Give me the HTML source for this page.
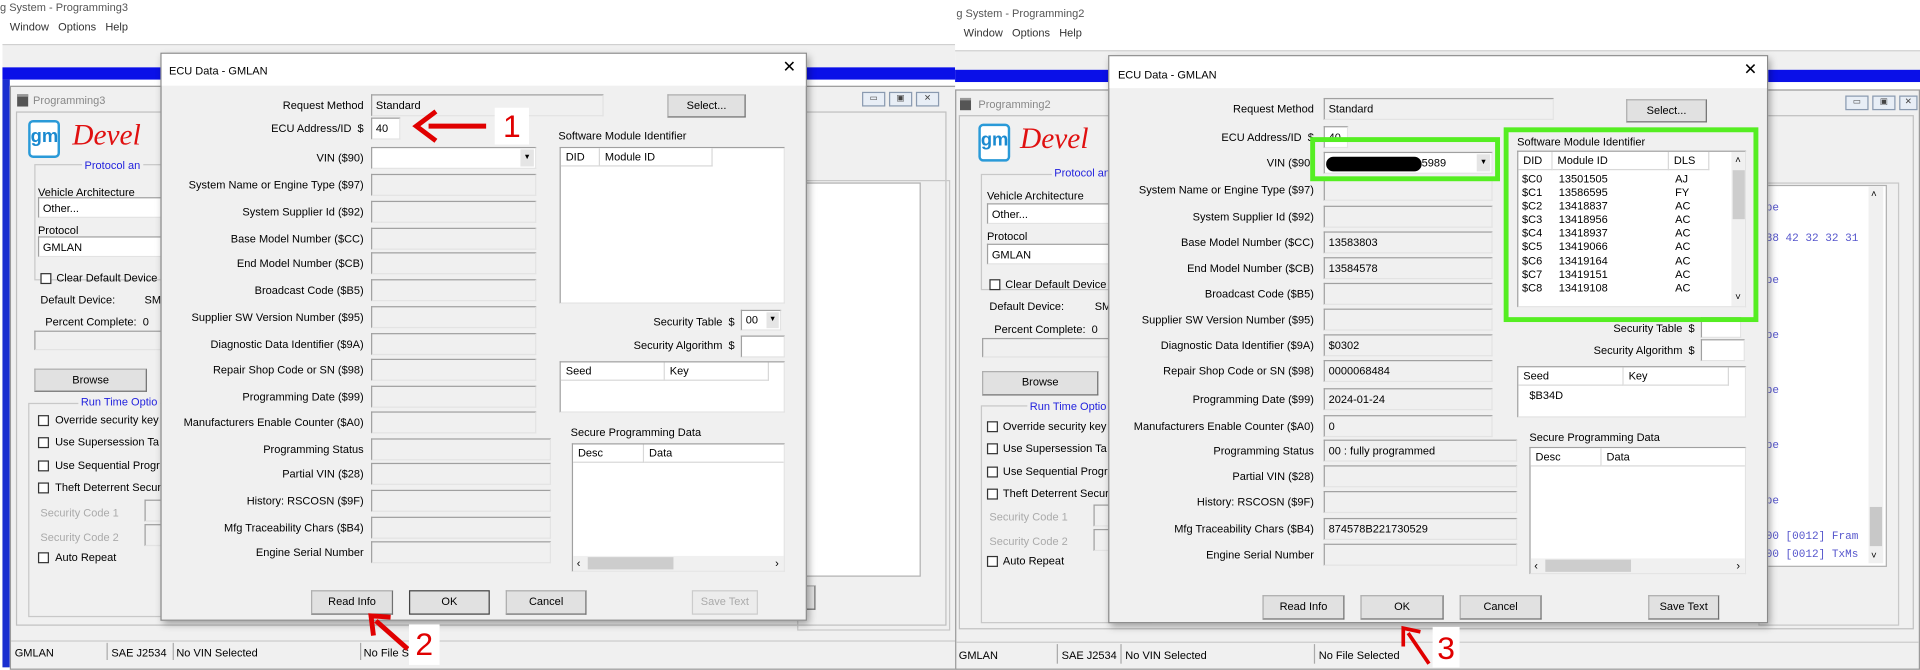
<!DOCTYPE html>
<html><head><meta charset="utf-8">
<style>
html,body{margin:0;padding:0;width:1920px;height:667px;overflow:hidden;background:#fff}
#s{position:absolute;left:0;top:0;width:1568px;height:545px;transform:scale(1.22449);transform-origin:0 0;font-family:"Liberation Sans",sans-serif;font-size:9px;color:#000}
.a{position:absolute}
.lb{position:absolute;white-space:nowrap;font-size:9px;line-height:12px}
.r{text-align:right}
.sk{position:absolute;box-sizing:border-box;background:#f0f0f0;border:1px solid #a0a0a0;border-right-color:#e3e3e3;border-bottom-color:#e3e3e3;font-size:9px;line-height:16px;padding-left:3px;white-space:nowrap;overflow:hidden}
.wh{background:#fff}
.bt{position:absolute;box-sizing:border-box;background:#e1e1e1;border:1px solid #adadad;border-right-color:#707070;border-bottom-color:#707070;text-align:center;font-size:9px;line-height:17px}
.cb{position:absolute;width:9px;height:9px;box-sizing:border-box;border:1px solid #333;background:#fff}
.dlg{position:absolute;background:#f0f0f0;border:1px solid #8a8a8a;box-shadow:2px 3px 6px rgba(0,0,0,.35)}
.tb{position:absolute;left:0;top:0;right:0;height:26px;background:#fff}
.lst{position:absolute;box-sizing:border-box;background:#fff;border:1px solid #a0a0a0;border-right-color:#e3e3e3;border-bottom-color:#e3e3e3;overflow:hidden}
.hd{position:absolute;top:0;height:15px;box-sizing:border-box;border-right:1px solid #d8d8d8;border-bottom:1px solid #d8d8d8;font-size:9px;line-height:14px;padding-left:4px;background:#fff}
.blue{color:#2222dd}
.gry{color:#999}
.mono{font-family:"Liberation Mono",monospace;color:#5555cc;font-size:9px}
.win{position:absolute;background:#f0f0f0;border:1px solid #9a9a9a}
.ctl{position:absolute;width:19px;height:12px;box-sizing:border-box;border:1px solid #8a9ab0;background:#e8eef6;font-size:7px;line-height:10px;text-align:center;color:#444}
.grp{position:absolute;box-sizing:border-box;border:1px solid #c8c8c8}
.green{position:absolute;box-sizing:border-box;border:4px solid #55ee22}
.num{position:absolute;background:#fff;font-size:26px;line-height:30px;text-align:center;color:#e00000}
</style></head><body><div id="s">

<div class="lb" style="left:0;top:0;color:#555">g System - Programming3</div>
<div class="lb" style="top:16px;left:8px;color:#333">Window&nbsp;&nbsp;&nbsp;Options&nbsp;&nbsp;&nbsp;Help</div>
<div class="a" style="left:2px;top:36px;width:778px;height:1px;background:#ccc"></div>
<div class="a" style="left:2px;top:37px;width:778px;height:18px;background:#f0f0f0"></div>
<div class="a" style="left:2px;top:55px;width:778px;height:10px;background:#0a10e8"></div>
<div class="a" style="left:2px;top:65px;width:6px;height:480px;background:#1a2fd0"></div>
<div class="win" style="left:8px;top:70px;width:772px;height:475px">
 <div class="a" style="left:5px;top:6px;width:9px;height:8px;background:#555;border-top:2px solid #999"></div>
 <div class="lb gry" style="left:18px;top:5px;color:#888">Programming3</div>
 <div class="ctl" style="left:695px;top:4px">▭</div><div class="ctl" style="left:717px;top:4px">▣</div><div class="ctl" style="left:739px;top:4px">✕</div>
 <div class="a" style="left:4px;top:20px;width:760px;height:420px;border:1px solid #c0c0c0;box-sizing:border-box"></div>
 <div class="a" style="left:14px;top:27px;width:26px;height:31px;border:2px solid #2a9ad8;border-radius:4px;box-sizing:border-box;background:#fff;color:#1a8ad0;font-weight:bold;font-size:15px;text-align:center;line-height:24px">gm</div>
 <div class="a" style="left:50px;top:27px;font-family:'Liberation Serif',serif;font-style:italic;font-size:24px;color:#e01010">Devel</div>
 <div class="grp" style="left:19px;top:63px;width:125px;height:95px"></div>
 <div class="lb blue" style="left:58px;top:58px;background:#f0f0f0;padding:0 2px">Protocol an</div>
 <div class="lb" style="left:22px;top:80px">Vehicle Architecture</div>
 <div class="sk wh" style="left:22px;top:90px;width:120px;height:17px">Other...</div>
 <div class="lb" style="left:22px;top:111px">Protocol</div>
 <div class="sk wh" style="left:22px;top:122px;width:120px;height:17px">GMLAN</div>
 <div class="cb" style="left:24px;top:152px"></div><div class="lb" style="left:37px;top:150px">Clear Default Device</div>
 <div class="lb" style="left:24px;top:168px">Default Device:</div><div class="lb" style="left:109px;top:168px">SM</div>
 <div class="lb" style="left:28px;top:186px">Percent Complete:&nbsp; 0</div>
 <div class="sk" style="left:19px;top:199px;width:130px;height:16px"></div>
 <div class="bt" style="left:19px;top:230px;width:92px;height:19px">Browse</div>
 <div class="grp" style="left:14px;top:258px;width:140px;height:175px"></div>
 <div class="lb blue" style="left:55px;top:251px;background:#f0f0f0;padding:0 2px">Run Time Optio</div>
 <div class="cb" style="left:22px;top:268px"></div><div class="lb" style="left:36px;top:266px">Override security key</div>
 <div class="cb" style="left:22px;top:286px"></div><div class="lb" style="left:36px;top:284px">Use Supersession Ta</div>
 <div class="cb" style="left:22px;top:305px"></div><div class="lb" style="left:36px;top:303px">Use Sequential Progr</div>
 <div class="cb" style="left:22px;top:323px"></div><div class="lb" style="left:36px;top:321px">Theft Deterrent Secur</div>
 <div class="lb" style="left:24px;top:342px;color:#aaa">Security Code 1</div><div class="sk" style="left:109px;top:337px;width:20px;height:18px"></div>
 <div class="lb" style="left:24px;top:362px;color:#aaa">Security Code 2</div><div class="sk" style="left:109px;top:357px;width:20px;height:18px"></div>
 <div class="cb" style="left:22px;top:380px"></div><div class="lb" style="left:36px;top:378px">Auto Repeat</div>
 <div class="grp" style="left:642px;top:76px;width:125px;height:368px"></div>
 <div class="a" style="left:647px;top:78px;width:94px;height:320px;background:#fff;border:1px solid #b0b0b0"></div>
 <div class="bt" style="left:600px;top:407px;width:57px;height:20px"></div>
 <div class="a" style="left:0;top:452px;width:772px;height:18px;border-top:1px solid #ccc"></div>
 <div class="lb" style="left:3px;top:456px">GMLAN</div>
 <div class="a" style="left:78px;top:454px;width:1px;height:14px;background:#aaa"></div>
 <div class="lb" style="left:82px;top:456px">SAE J2534</div>
 <div class="a" style="left:132px;top:454px;width:1px;height:14px;background:#aaa"></div>
 <div class="lb" style="left:135px;top:456px">No VIN Selected</div>
 <div class="a" style="left:285px;top:454px;width:1px;height:14px;background:#aaa"></div>
 <div class="lb" style="left:288px;top:456px">No File S</div>
</div>

<div class="dlg" style="left:131px;top:43px;width:526px;height:462px">
 <div class="tb"></div>
 <div class="lb" style="left:6px;top:8px">ECU Data - GMLAN</div>
 <div class="lb" style="right:8px;top:5px;font-size:13px">✕</div>
 <div class="lb r" style="left:0;width:165px;top:36px">Request Method</div>
 <div class="lb r" style="left:0;width:165px;top:55px">ECU Address/ID&nbsp; $</div>
 <div class="lb r" style="left:0;width:165px;top:79px">VIN ($90)</div>
 <div class="lb r" style="left:0;width:165px;top:101px">System Name or Engine Type ($97)</div>
 <div class="lb r" style="left:0;width:165px;top:123px">System Supplier Id ($92)</div>
 <div class="lb r" style="left:0;width:165px;top:145px">Base Model Number ($CC)</div>
 <div class="lb r" style="left:0;width:165px;top:165px">End Model Number ($CB)</div>
 <div class="lb r" style="left:0;width:165px;top:187px">Broadcast Code ($B5)</div>
 <div class="lb r" style="left:0;width:165px;top:209px">Supplier SW Version Number ($95)</div>
 <div class="lb r" style="left:0;width:165px;top:231px">Diagnostic Data Identifier ($9A)</div>
 <div class="lb r" style="left:0;width:165px;top:252px">Repair Shop Code or SN ($98)</div>
 <div class="lb r" style="left:0;width:165px;top:274px">Programming Date ($99)</div>
 <div class="lb r" style="left:0;width:165px;top:295px">Manufacturers Enable Counter ($A0)</div>
 <div class="lb r" style="left:0;width:165px;top:317px">Programming Status</div>
 <div class="lb r" style="left:0;width:165px;top:337px">Partial VIN ($28)</div>
 <div class="lb r" style="left:0;width:165px;top:359px">History: RSCOSN ($9F)</div>
 <div class="lb r" style="left:0;width:165px;top:381px">Mfg Traceability Chars ($B4)</div>
 <div class="lb r" style="left:0;width:165px;top:401px">Engine Serial Number</div>
 <div class="sk" style="left:171px;top:33px;width:190px;height:18px">Standard</div>
 <div class="sk wh" style="left:171px;top:52px;width:24px;height:18px">40</div>
 <div class="sk wh" style="left:171px;top:76px;width:135px;height:18px"></div>
 <div class="a" style="left:293px;top:78px;width:11px;height:14px;background:#e5e5e5;font-size:6px;text-align:center;line-height:14px">▼</div>
 <div class="sk" style="left:171px;top:98px;width:135px;height:18px"></div>
 <div class="sk" style="left:171px;top:120px;width:135px;height:18px"></div>
 <div class="sk" style="left:171px;top:142px;width:135px;height:18px"></div>
 <div class="sk" style="left:171px;top:162px;width:135px;height:18px"></div>
 <div class="sk" style="left:171px;top:184px;width:135px;height:18px"></div>
 <div class="sk" style="left:171px;top:206px;width:135px;height:18px"></div>
 <div class="sk" style="left:171px;top:228px;width:135px;height:18px"></div>
 <div class="sk" style="left:171px;top:249px;width:135px;height:18px"></div>
 <div class="sk" style="left:171px;top:271px;width:135px;height:18px"></div>
 <div class="sk" style="left:171px;top:292px;width:135px;height:18px"></div>
 <div class="sk" style="left:171px;top:314px;width:147px;height:18px"></div>
 <div class="sk" style="left:171px;top:334px;width:147px;height:18px"></div>
 <div class="sk" style="left:171px;top:356px;width:147px;height:18px"></div>
 <div class="sk" style="left:171px;top:378px;width:147px;height:18px"></div>
 <div class="sk" style="left:171px;top:398px;width:147px;height:18px"></div>
 <div class="bt" style="left:413px;top:33px;width:64px;height:19px">Select...</div>
 <div class="lb" style="left:324px;top:61px">Software Module Identifier</div>
 <div class="lst" style="left:325px;top:76px;width:184px;height:128px">
  <div class="hd" style="left:0;width:32px">DID</div><div class="hd" style="left:32px;width:92px">Module ID</div></div>
 <div class="lb r" style="left:360px;width:108px;top:213px">Security Table&nbsp; $</div>
 <div class="sk wh" style="left:473px;top:209px;width:33px;height:17px;line-height:14px">00</div>
 <div class="a" style="left:494px;top:211px;width:10px;height:13px;background:#e5e5e5;font-size:6px;text-align:center;line-height:13px">▼</div>
 <div class="lb r" style="left:360px;width:108px;top:232px">Security Algorithm&nbsp; $</div>
 <div class="sk wh" style="left:473px;top:230px;width:36px;height:18px"></div>
 <div class="lst" style="left:325px;top:251px;width:184px;height:42px">
  <div class="hd" style="left:0;width:85px">Seed</div><div class="hd" style="left:85px;width:85px">Key</div></div>
 <div class="lb" style="left:334px;top:303px">Secure Programming Data</div>
 <div class="lst" style="left:335px;top:318px;width:174px;height:105px">
  <div class="hd" style="left:0;width:58px">Desc</div><div class="hd" style="left:58px;width:116px">Data</div>
  <div class="a" style="left:0;bottom:0;width:174px;height:12px;background:#f0f0f0"></div>
  <div class="a" style="left:12px;bottom:1px;width:70px;height:10px;background:#cdcdcd"></div>
  <div class="lb" style="left:3px;bottom:0">‹</div><div class="lb" style="right:4px;bottom:0">›</div></div>
 <div class="bt" style="left:122px;top:438px;width:67px;height:20px">Read Info</div>
 <div class="bt" style="left:202px;top:438px;width:66px;height:20px;border:1px solid #444">OK</div>
 <div class="bt" style="left:281px;top:438px;width:66px;height:20px">Cancel</div>
 <div class="bt" style="left:433px;top:438px;width:54px;height:20px;color:#aaa;background:#ececec;border-color:#ccc">Save Text</div>
</div>

<svg class="a" style="left:0;top:0" width="1568" height="545">
 <line x1="397" y1="103" x2="350" y2="103" stroke="#e00000" stroke-width="4"/>
 <polyline points="356,91 340,103 356,115" fill="none" stroke="#e00000" stroke-width="4"/>
 <line x1="333" y1="530" x2="307" y2="507" stroke="#e00000" stroke-width="4"/>
 <polyline points="305,519 303,503 319,504" fill="none" stroke="#e00000" stroke-width="4"/>
</svg>
<div class="num" style="left:404px;top:88px;width:28px;height:30px">1</div>
<div class="num" style="left:334px;top:510px;width:25px;height:33px;line-height:32px">2</div>

<div class="a" style="left:780px;top:0;width:788px;height:545px;background:#fff"></div>
<div class="lb" style="left:781px;top:5px;color:#555">g System - Programming2</div>
<div class="lb" style="left:787px;top:21px;color:#333">Window&nbsp;&nbsp;&nbsp;Options&nbsp;&nbsp;&nbsp;Help</div>
<div class="a" style="left:780px;top:41px;width:788px;height:1px;background:#ccc"></div>
<div class="a" style="left:780px;top:42px;width:788px;height:15px;background:#f0f0f0"></div>
<div class="a" style="left:780px;top:57px;width:788px;height:10px;background:#0a10e8"></div>
<div class="win" style="left:780px;top:73px;width:786px;height:472px">
 <div class="a" style="left:3px;top:6px;width:9px;height:8px;background:#555;border-top:2px solid #999"></div>
 <div class="lb" style="left:18px;top:5px;color:#888">Programming2</div>
 <div class="ctl" style="left:726px;top:4px">▭</div><div class="ctl" style="left:748px;top:4px">▣</div><div class="ctl" style="left:770px;top:4px;width:15px">✕</div>
 <div class="a" style="left:2px;top:20px;width:780px;height:420px;border:1px solid #c0c0c0;box-sizing:border-box"></div>
 <div class="a" style="left:18px;top:27px;width:26px;height:31px;border:2px solid #2a9ad8;border-radius:4px;box-sizing:border-box;background:#fff;color:#1a8ad0;font-weight:bold;font-size:15px;text-align:center;line-height:24px">gm</div>
 <div class="a" style="left:52px;top:27px;font-family:'Liberation Serif',serif;font-style:italic;font-size:24px;color:#e01010">Devel</div>
 <div class="grp" style="left:20px;top:68px;width:125px;height:95px"></div>
 <div class="lb blue" style="left:78px;top:61px;background:#f0f0f0;padding:0 2px">Protocol an</div>
 <div class="lb" style="left:25px;top:80px">Vehicle Architecture</div>
 <div class="sk wh" style="left:25px;top:92px;width:120px;height:17px">Other...</div>
 <div class="lb" style="left:25px;top:113px">Protocol</div>
 <div class="sk wh" style="left:25px;top:125px;width:120px;height:17px">GMLAN</div>
 <div class="cb" style="left:27px;top:154px"></div><div class="lb" style="left:40px;top:152px">Clear Default Device</div>
 <div class="lb" style="left:27px;top:170px">Default Device:</div><div class="lb" style="left:113px;top:170px">SM</div>
 <div class="lb" style="left:31px;top:189px">Percent Complete:&nbsp; 0</div>
 <div class="sk" style="left:21px;top:202px;width:130px;height:16px"></div>
 <div class="bt" style="left:21px;top:229px;width:95px;height:20px">Browse</div>
 <div class="grp" style="left:20px;top:257px;width:140px;height:178px"></div>
 <div class="lb blue" style="left:58px;top:252px;background:#f0f0f0;padding:0 2px">Run Time Optio</div>
 <div class="cb" style="left:25px;top:270px"></div><div class="lb" style="left:38px;top:268px">Override security key</div>
 <div class="cb" style="left:25px;top:288px"></div><div class="lb" style="left:38px;top:286px">Use Supersession Ta</div>
 <div class="cb" style="left:25px;top:307px"></div><div class="lb" style="left:38px;top:305px">Use Sequential Progr</div>
 <div class="cb" style="left:25px;top:325px"></div><div class="lb" style="left:38px;top:323px">Theft Deterrent Secur</div>
 <div class="lb" style="left:27px;top:342px;color:#aaa">Security Code 1</div><div class="sk" style="left:112px;top:338px;width:20px;height:18px"></div>
 <div class="lb" style="left:27px;top:362px;color:#aaa">Security Code 2</div><div class="sk" style="left:112px;top:358px;width:20px;height:18px"></div>
 <div class="cb" style="left:25px;top:380px"></div><div class="lb" style="left:38px;top:378px">Auto Repeat</div>
 <div class="grp" style="left:655px;top:75px;width:115px;height:362px"></div>
 <div class="a" style="left:660px;top:77px;width:98px;height:310px;background:#fff;border:1px solid #b0b0b0"></div>
 <div class="a" style="left:745px;top:78px;width:12px;height:308px;background:#f0f0f0"></div>
 <div class="a" style="left:746px;top:340px;width:10px;height:32px;background:#c8c8c8"></div>
 <div class="lb" style="left:747px;top:79px;font-size:8px">˄</div>
 <div class="lb" style="left:747px;top:374px;font-size:8px">˅</div>
 <div class="mono a" style="left:661px;top:91px">pe</div>
 <div class="mono a" style="left:661px;top:116px">38 42 32 32 31</div>
 <div class="mono a" style="left:661px;top:150px">pe</div>
 <div class="mono a" style="left:661px;top:195px">pe</div>
 <div class="mono a" style="left:661px;top:240px">pe</div>
 <div class="mono a" style="left:661px;top:285px">pe</div>
 <div class="mono a" style="left:661px;top:330px">pe</div>
 <div class="mono a" style="left:661px;top:359px">00 [0012] Fram</div>
 <div class="mono a" style="left:661px;top:374px">00 [0012] TxMs</div>
 <div class="bt" style="left:640px;top:404px;width:18px;height:22px"></div>
 <div class="a" style="left:0;top:450px;width:786px;height:20px;border-top:1px solid #ccc"></div>
 <div class="lb" style="left:2px;top:455px">GMLAN</div>
 <div class="a" style="left:82px;top:452px;width:1px;height:16px;background:#aaa"></div>
 <div class="lb" style="left:86px;top:455px">SAE J2534</div>
 <div class="a" style="left:134px;top:452px;width:1px;height:16px;background:#aaa"></div>
 <div class="lb" style="left:138px;top:455px">No VIN Selected</div>
 <div class="a" style="left:292px;top:452px;width:1px;height:16px;background:#aaa"></div>
 <div class="lb" style="left:296px;top:455px">No File Selected</div>
</div>

<div class="dlg" style="left:905px;top:45px;width:537px;height:462px">
 <div class="tb"></div>
 <div class="lb" style="left:7px;top:9px">ECU Data - GMLAN</div>
 <div class="lb" style="right:8px;top:5px;font-size:13px">✕</div>
 <div class="lb r" style="left:0;width:167px;top:37px">Request Method</div>
 <div class="lb r" style="left:0;width:167px;top:60px">ECU Address/ID&nbsp; $</div>
 <div class="lb r" style="left:0;width:167px;top:81px">VIN ($90)</div>
 <div class="lb r" style="left:0;width:167px;top:103px">System Name or Engine Type ($97)</div>
 <div class="lb r" style="left:0;width:167px;top:125px">System Supplier Id ($92)</div>
 <div class="lb r" style="left:0;width:167px;top:146px">Base Model Number ($CC)</div>
 <div class="lb r" style="left:0;width:167px;top:167px">End Model Number ($CB)</div>
 <div class="lb r" style="left:0;width:167px;top:188px">Broadcast Code ($B5)</div>
 <div class="lb r" style="left:0;width:167px;top:209px">Supplier SW Version Number ($95)</div>
 <div class="lb r" style="left:0;width:167px;top:230px">Diagnostic Data Identifier ($9A)</div>
 <div class="lb r" style="left:0;width:167px;top:251px">Repair Shop Code or SN ($98)</div>
 <div class="lb r" style="left:0;width:167px;top:274px">Programming Date ($99)</div>
 <div class="lb r" style="left:0;width:167px;top:296px">Manufacturers Enable Counter ($A0)</div>
 <div class="lb r" style="left:0;width:167px;top:316px">Programming Status</div>
 <div class="lb r" style="left:0;width:167px;top:337px">Partial VIN ($28)</div>
 <div class="lb r" style="left:0;width:167px;top:358px">History: RSCOSN ($9F)</div>
 <div class="lb r" style="left:0;width:167px;top:380px">Mfg Traceability Chars ($B4)</div>
 <div class="lb r" style="left:0;width:167px;top:401px">Engine Serial Number</div>
 <div class="sk" style="left:175px;top:34px;width:188px;height:18px">Standard</div>
 <div class="sk wh" style="left:175px;top:57px;width:20px;height:18px">40</div>
 <div class="sk wh" style="left:175px;top:78px;width:138px;height:18px"><span style="display:inline-block;width:78px;height:12px;background:#000;border-radius:7px;vertical-align:middle;margin-left:-2px"></span>5989</div>
 <div class="a" style="left:300px;top:80px;width:11px;height:14px;background:#e5e5e5;font-size:6px;text-align:center;line-height:14px">▼</div>
 <div class="sk" style="left:175px;top:100px;width:138px;height:18px"></div>
 <div class="sk" style="left:175px;top:122px;width:138px;height:18px"></div>
 <div class="sk" style="left:175px;top:143px;width:138px;height:18px">13583803</div>
 <div class="sk" style="left:175px;top:164px;width:138px;height:18px">13584578</div>
 <div class="sk" style="left:175px;top:185px;width:138px;height:18px"></div>
 <div class="sk" style="left:175px;top:206px;width:138px;height:18px"></div>
 <div class="sk" style="left:175px;top:227px;width:138px;height:18px">$0302</div>
 <div class="sk" style="left:175px;top:248px;width:138px;height:18px">0000068484</div>
 <div class="sk" style="left:175px;top:271px;width:138px;height:18px">2024-01-24</div>
 <div class="sk" style="left:175px;top:293px;width:138px;height:18px">0</div>
 <div class="sk" style="left:175px;top:313px;width:158px;height:18px">00 : fully programmed</div>
 <div class="sk" style="left:175px;top:334px;width:158px;height:18px"></div>
 <div class="sk" style="left:175px;top:355px;width:158px;height:18px"></div>
 <div class="sk" style="left:175px;top:377px;width:158px;height:18px">874578B221730529</div>
 <div class="sk" style="left:175px;top:398px;width:158px;height:18px"></div>
 <div class="bt" style="left:422px;top:35px;width:66px;height:19px">Select...</div>
 <div class="lb" style="left:333px;top:64px">Software Module Identifier</div>
 <div class="lst" style="left:333px;top:77px;width:187px;height:128px">
  <div class="hd" style="left:0;width:28px">DID</div><div class="hd" style="left:28px;width:95px">Module ID</div><div class="hd" style="left:123px;width:33px">DLS</div>
  <div class="a" style="left:174px;top:0;width:12px;height:126px;background:#f0f0f0"></div>
  <div class="a" style="left:175px;top:15px;width:10px;height:40px;background:#cdcdcd"></div>
  <div class="lb" style="left:177px;top:1px;font-size:8px">˄</div><div class="lb" style="left:177px;top:113px;font-size:8px">˅</div>
  <div class="lb" style="left:3px;top:17px;line-height:11.1px">$C0<br>$C1<br>$C2<br>$C3<br>$C4<br>$C5<br>$C6<br>$C7<br>$C8</div>
  <div class="lb" style="left:33px;top:17px;line-height:11.1px">13501505<br>13586595<br>13418837<br>13418956<br>13418937<br>13419066<br>13419164<br>13419151<br>13419108</div>
  <div class="lb" style="left:128px;top:17px;line-height:11.1px">AJ<br>FY<br>AC<br>AC<br>AC<br>AC<br>AC<br>AC<br>AC</div>
 </div>
 <div class="lb r" style="left:370px;width:108px;top:216px">Security Table&nbsp; $</div>
 <div class="sk wh" style="left:483px;top:213px;width:33px;height:17px"></div>
 <div class="lb r" style="left:370px;width:108px;top:234px">Security Algorithm&nbsp; $</div>
 <div class="sk wh" style="left:483px;top:231px;width:36px;height:18px"></div>
 <div class="lst" style="left:333px;top:253px;width:187px;height:42px">
  <div class="hd" style="left:0;width:86px">Seed</div><div class="hd" style="left:86px;width:86px">Key</div>
  <div class="lb" style="left:9px;top:17px">$B34D</div></div>
 <div class="lb" style="left:343px;top:305px">Secure Programming Data</div>
 <div class="lst" style="left:343px;top:319px;width:177px;height:104px">
  <div class="hd" style="left:0;width:58px">Desc</div><div class="hd" style="left:58px;width:119px">Data</div>
  <div class="a" style="left:0;bottom:0;width:177px;height:12px;background:#f0f0f0"></div>
  <div class="a" style="left:12px;bottom:1px;width:70px;height:10px;background:#cdcdcd"></div>
  <div class="lb" style="left:3px;bottom:0">‹</div><div class="lb" style="right:4px;bottom:0">›</div></div>
 <div class="bt" style="left:125px;top:440px;width:67px;height:20px">Read Info</div>
 <div class="bt" style="left:205px;top:440px;width:68px;height:20px">OK</div>
 <div class="bt" style="left:286px;top:440px;width:67px;height:20px">Cancel</div>
 <div class="bt" style="left:440px;top:440px;width:58px;height:20px">Save Text</div>
</div>
<div class="green" style="left:1070px;top:112px;width:155px;height:36px"></div>
<div class="green" style="left:1228px;top:104px;width:208px;height:159px"></div>
<div class="num" style="left:1170px;top:512px;width:22px;height:33px;line-height:34px">3</div>
<svg class="a" style="left:0;top:0" width="1568" height="545">
 <line x1="1167" y1="542" x2="1150" y2="517" stroke="#e00000" stroke-width="3"/>
 <polyline points="1146,528 1146,513 1160,516" fill="none" stroke="#e00000" stroke-width="3"/>
</svg>
</div></body></html>
